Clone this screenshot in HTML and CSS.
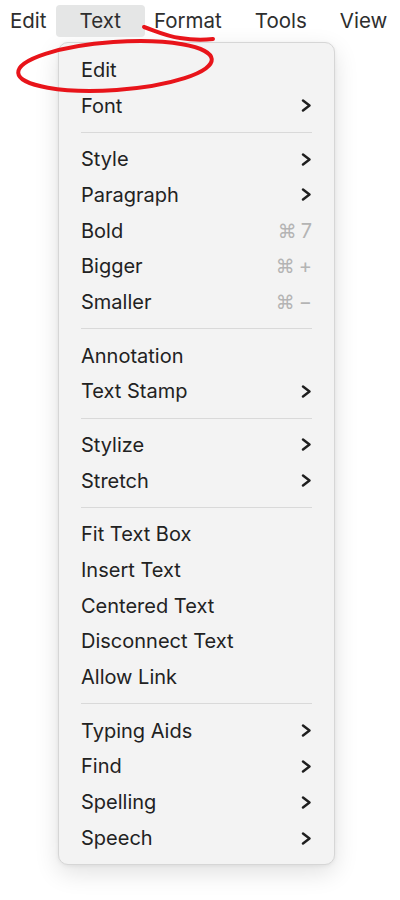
FILE: index.html
```html
<!DOCTYPE html>
<html lang="en">
<head>
  <meta charset="UTF-8">
  <meta name="viewport" content="width=device-width, initial-scale=1.0">
  <title>Text Menu</title>
  <link rel="stylesheet" href="styles.css">
</head>
<body>
  <div class="screen">
    <!-- Menu bar -->
    <div class="menubar">
      <span class="bar-item">Edit</span>
      <span class="bar-item active">Text</span>
      <span class="bar-item">Format</span>
      <span class="bar-item">Tools</span>
      <span class="bar-item">View</span>
    </div>

    <!-- Dropdown -->
    <div class="menu">
      <div class="row"><span>Edit</span></div>
      <div class="row"><span>Font</span><svg class="chev" viewBox="0 0 11 13"><polyline points="2,1.5 8.5,6.5 2,11.5"/></svg></div>
      <div class="sep"></div>
      <div class="row"><span>Style</span><svg class="chev" viewBox="0 0 11 13"><polyline points="2,1.5 8.5,6.5 2,11.5"/></svg></div>
      <div class="row"><span>Paragraph</span><svg class="chev" viewBox="0 0 11 13"><polyline points="2,1.5 8.5,6.5 2,11.5"/></svg></div>
      <div class="row"><span>Bold</span><span class="key"><i>⌘</i>7</span></div>
      <div class="row"><span>Bigger</span><span class="key"><i>⌘</i>+</span></div>
      <div class="row"><span>Smaller</span><span class="key"><i>⌘</i>−</span></div>
      <div class="sep"></div>
      <div class="row"><span>Annotation</span></div>
      <div class="row"><span>Text Stamp</span><svg class="chev" viewBox="0 0 11 13"><polyline points="2,1.5 8.5,6.5 2,11.5"/></svg></div>
      <div class="sep"></div>
      <div class="row"><span>Stylize</span><svg class="chev" viewBox="0 0 11 13"><polyline points="2,1.5 8.5,6.5 2,11.5"/></svg></div>
      <div class="row"><span>Stretch</span><svg class="chev" viewBox="0 0 11 13"><polyline points="2,1.5 8.5,6.5 2,11.5"/></svg></div>
      <div class="sep"></div>
      <div class="row"><span>Fit Text Box</span></div>
      <div class="row"><span>Insert Text</span></div>
      <div class="row"><span>Centered Text</span></div>
      <div class="row"><span>Disconnect Text</span></div>
      <div class="row"><span>Allow Link</span></div>
      <div class="sep"></div>
      <div class="row"><span>Typing Aids</span><svg class="chev" viewBox="0 0 11 13"><polyline points="2,1.5 8.5,6.5 2,11.5"/></svg></div>
      <div class="row"><span>Find</span><svg class="chev" viewBox="0 0 11 13"><polyline points="2,1.5 8.5,6.5 2,11.5"/></svg></div>
      <div class="row"><span>Spelling</span><svg class="chev" viewBox="0 0 11 13"><polyline points="2,1.5 8.5,6.5 2,11.5"/></svg></div>
      <div class="row"><span>Speech</span><svg class="chev" viewBox="0 0 11 13"><polyline points="2,1.5 8.5,6.5 2,11.5"/></svg></div>
    </div>

    <!-- Hand-drawn red mark over the menu -->
    <svg class="scribble" viewBox="0 0 400 120" width="400" height="120">
      <path d="M144 27 C 156 31, 166 36, 180 38 C 192 40, 204 40, 213 39"/>
      <ellipse cx="115" cy="66" rx="97" ry="24" transform="rotate(-4 115 66)"/>
    </svg>
  </div>
</body>
</html>
```

FILE: styles.css
```css
* {
  margin: 0;
  padding: 0;
  box-sizing: border-box;
}

body {
  background: #fff;
  font-family: 'Inter', 'Noto Sans', 'DejaVu Sans', sans-serif;
  width: 400px;
  height: 900px;
  overflow: hidden;
}

.screen {
  position: relative;
  height: 900px;
}

.menubar {
  display: flex;
  gap: 33px;
  padding: 5px 0 0 10px;
  white-space: nowrap;
}

.bar-item {
  font-size: 20.5px;
  line-height: 32px;
  height: 32px;
  color: #2e2e2e;
}

.bar-item.active {
  background: #e5e6e6;
  border-radius: 4px;
  padding: 0 24px;
  margin: 0 -24px;
}

.menu {
  margin: 5px 0 0 58px;
  width: 277px;
  padding: 9px 0 8px;
  background: #f3f3f3;
  border: 1px solid #d6d6d6;
  border-radius: 10px;
  box-shadow: 0 8px 24px rgba(0, 0, 0, 0.12), 0 1px 4px rgba(0, 0, 0, 0.06);
}

.row {
  display: flex;
  align-items: center;
  justify-content: space-between;
  height: 35.8px;
  padding: 0 22px;
  font-size: 20px;
  color: #222;
}

.chev {
  width: 11px;
  height: 13px;
  fill: none;
  stroke: #1e1e1e;
  stroke-width: 2.4;
  stroke-linecap: round;
  stroke-linejoin: round;
}

.key {
  color: #b4b4b4;
  display: flex;
  align-items: center;
  gap: 4px;
}

.key i {
  font-style: normal;
  font-family: 'DejaVu Sans', sans-serif;
  font-size: 19px;
}

.sep {
  height: 17.6px;
  margin: 0 22px;
  display: flex;
  align-items: center;
}

.sep::before {
  content: '';
  flex: 1;
  height: 1px;
  background: #d9d9d9;
}

.scribble {
  position: absolute;
  left: 0;
  top: 0;
  fill: none;
  stroke: #e8141a;
  stroke-width: 4;
  stroke-linecap: round;
}
```
